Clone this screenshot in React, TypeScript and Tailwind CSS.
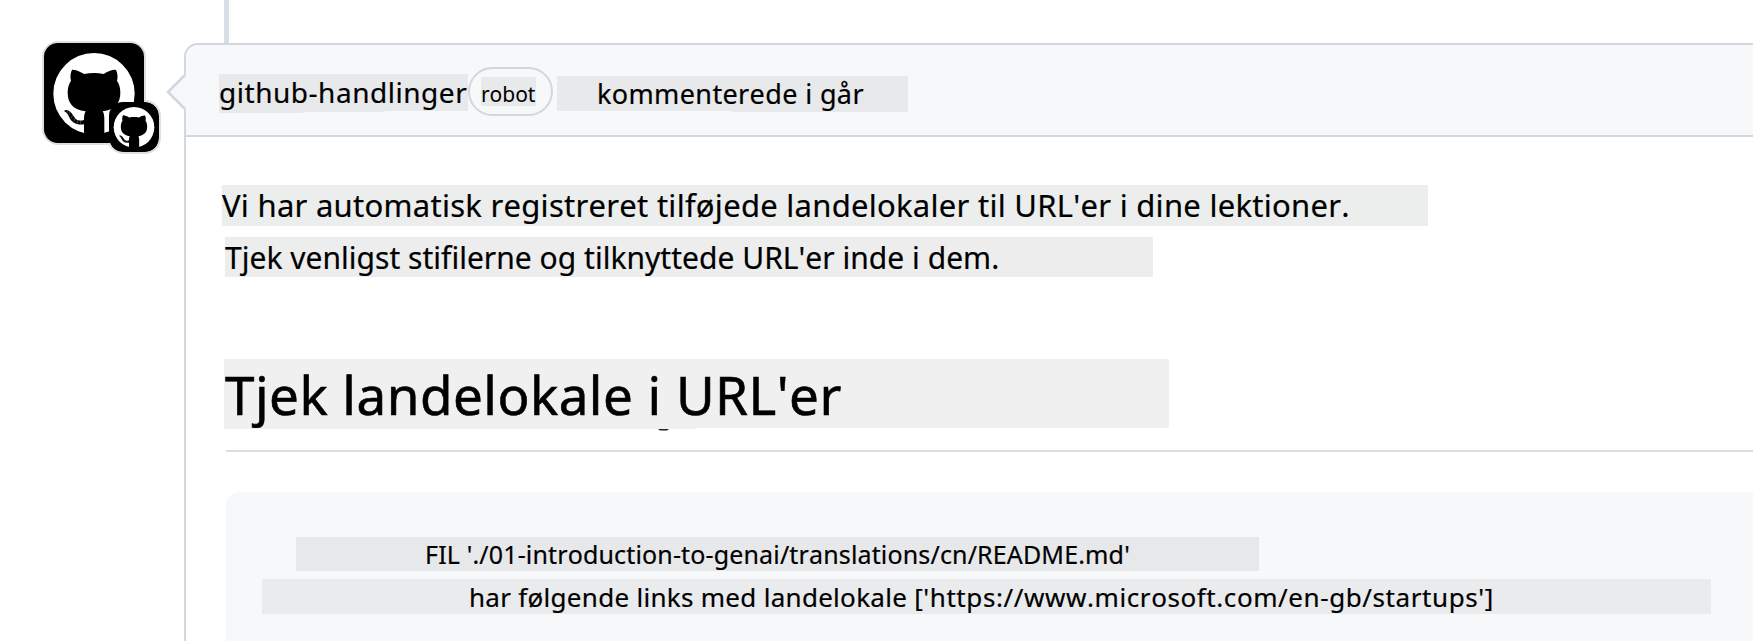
function Mark({ className }: { className: string }) {
  return (
    <svg viewBox="0 0 300 300" className={className} aria-hidden="true">
      <circle cx="150" cy="152" r="122" fill="#fff" />
      <path
        fill="#000"
        d="M84 80C93 79 108 85 121 93C139 89 161 89 179 93C192 85 207 79 216 81C221 91 222 103 219 113C226 123 229 135 229 149C229 179 214 200 176 205C180 211 181 219 181 228V284H120V244C98 247 84 239 77 225C73 216 69 208 60 204C66 198 77 203 83 211C91 221 94 231 104 232C111 234 118 232 120 230C120 219 121 211 125 205C86 200 71 179 71 149C71 135 74 123 81 113C78 102 79 91 84 80Z"
      />
      <path d="M69 202l3 7M78 205l-1 10M86 216l-4 9M93 226l-3 9M101 231l-1 10M110 232v10" stroke="#fff" strokeWidth="1.5" strokeOpacity=".55" />
    </svg>
  );
}

function Avatar() {
  return (
    <div className="relative size-[100px] rounded-[14px] bg-black ring-2 ring-[#dfdfdf]">
      <Mark className="size-full" />
      <div className="absolute left-[65px] top-[59px] size-[50px] rounded-[14px] bg-black">
        <Mark className="size-full" />
        <svg viewBox="0 0 54 54" className="absolute -left-0.5 -top-0.5 size-[54px]" aria-hidden="true">
          <path d="M37 1H38A15 15 0 0 1 53 16V38A15 15 0 0 1 38 53H16A15 15 0 0 1 2 43" fill="none" stroke="#dfdfdf" strokeWidth="2" />
        </svg>
      </div>
    </div>
  );
}

function CommentHeader() {
  return (
    <header className="flex h-[92px] items-start rounded-tl-[12px] border-b-2 border-[#d0d7e0] bg-[#f6f8fa] pl-[33px]">
      <div className="relative mt-[29px] h-[37px] w-[249px] bg-[#e8e9eb] text-[28px] leading-[37px] tracking-[0.53px]">
        github-handlinger
        <i className="absolute left-0 top-full h-px w-[166px] bg-[#e8e9eb]" />
        <i className="absolute left-0 top-[38px] h-px w-[84px] bg-[#e8e9eb]" />
      </div>
      <div className="mt-[22px] flex h-[49px] w-[85px] rounded-full border-2 border-[#d0d7de] pl-[11px] pt-2">
        <span className="h-[29px] w-[55px] bg-[#e8e9eb] text-[21px] leading-[35px] tracking-[-0.05px] [-webkit-text-stroke:0px]">robot</span>
      </div>
      <div className="relative ml-1 mt-[31px] h-[35px] w-[351px] bg-[#e8e9eb] pl-[40px] text-[27px] leading-[36px] tracking-[0.37px]">
        kommenterede i går
        <i className="absolute right-0 top-full h-px w-[176px] bg-[#e8e9eb]" />
      </div>
    </header>
  );
}

export default function App() {
  return (
    <div className="h-[641px] w-full overflow-hidden bg-white font-['Noto_Sans',sans-serif] whitespace-nowrap text-black [-webkit-text-stroke:0.2px] [font-kerning:none]">
      <div className="h-[43px] pl-[224px]">
        <div className="h-full w-[5px] bg-[#d9dde5]" />
      </div>
      <div className="flex">
        <div className="w-[184px] shrink-0 pl-[44px]">
          <Avatar />
        </div>
        <section className="relative h-[620px] min-w-0 flex-1 rounded-tl-[14px] border-l-2 border-t-2 border-[#d0d7de]">
          <svg className="absolute -left-[21px] top-[26px] h-[42px] w-[26px]" viewBox="0 0 26 42" aria-hidden="true">
            <path d="M20 4v34h4V4z" fill="#f6f8fa" />
            <path d="M20 4L3 21l17 17" fill="#f6f8fa" stroke="#d0d7e0" strokeWidth="2.6" />
          </svg>
          <CommentHeader />
          <div className="pl-10 pt-12">
            <p className="-ml-1 h-[41px] w-[1206px] bg-[#eceeed] text-[31px] leading-[41px] tracking-[0.27px]">
              Vi har automatisk registreret tilføjede landelokaler til URL'er i dine lektioner.
            </p>
            <p className="-ml-px mt-[11px] h-[40px] w-[928px] bg-[#ededed] text-[30px] leading-[41px] tracking-[0.02px]">
              Tjek venligst stifilerne og tilknyttede URL'er inde i dem.
            </p>
            <div className="mt-[82px] h-[93px] border-b-2 border-[#d8dee4]">
              <h2 className="relative -ml-[2px] h-[69px] w-[945px] bg-[#f0f0f0] pl-[1px] text-[53px] leading-[72px] tracking-[0.45px] [-webkit-text-stroke:0.6px]">
                Tjek landelokale i URL'er
                <i className="absolute left-0 top-full h-px w-[473px] bg-[#f0f0f0]" />
                <svg className="absolute left-[434px] top-[70px] h-[2px] w-[12px]" viewBox="0 0 12 2" aria-hidden="true">
                  <path d="M0 0H11L9 1.5H2Z" fill="#1f2328" />
                </svg>
              </h2>
            </div>
            <div className="mt-10 h-[170px] rounded-l-[14px] bg-[#f6f8fa] pl-9 pt-[45px]">
              <div className="ml-[34px] h-[34px] w-[963px] bg-[#e7e8ea] pl-[129px] text-[25px] leading-[35px] tracking-[0.15px]">
                FIL './01-introduction-to-genai/translations/cn/README.md'
              </div>
              <div className="mt-2 h-[35px] w-[1449px] bg-[#eaebed] pl-[207px] text-[26px] leading-[36px] tracking-[0.29px]">
                har følgende links med landelokale <span className="tracking-[0.58px]">['https://www.microsoft.com/en-gb/startups']</span>
              </div>
            </div>
          </div>
        </section>
      </div>
    </div>
  );
}
